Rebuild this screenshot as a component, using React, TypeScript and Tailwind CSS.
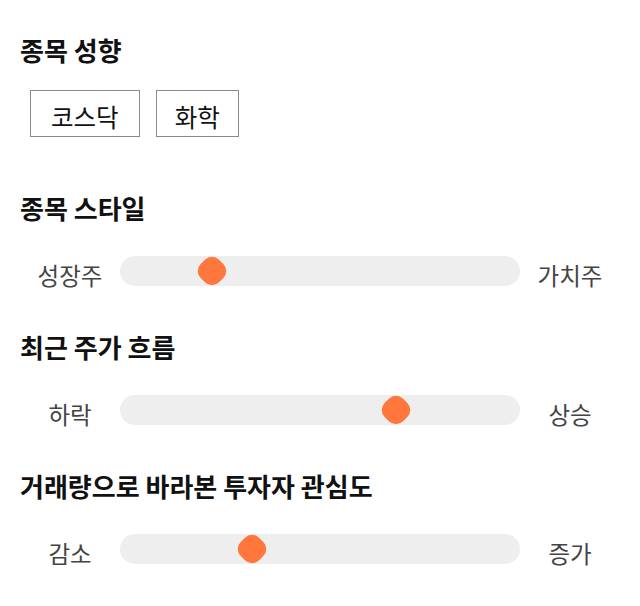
import React from 'react';

const font = { fontFamily: '"Noto Sans CJK KR", "Noto Sans", sans-serif' };

type SliderProps = {
  left: string;
  right: string;
  value: number; // 0..1 along the track
};

function Slider({ left, right, value }: SliderProps) {
  return (
    <div className="flex items-center h-[30px]">
      <span className="w-[100px] text-center text-[23.5px] text-[#444444] translate-y-[5px]">{left}</span>
      <div className="relative w-[400px] h-[30px] rounded-full bg-[#eeeeee]">
        <div
          className="absolute top-1/2 -translate-x-1/2 -translate-y-1/2"
          style={{ left: `${value * 100}%` }}
        >
          <div className="w-[26px] h-[26px] rounded-[10px] rotate-45 bg-[#ff773d]" />
        </div>
      </div>
      <span className="w-[100px] text-center text-[23.5px] text-[#444444] translate-y-[5px]">{right}</span>
    </div>
  );
}

export default function App() {
  return (
    <div className="min-h-screen bg-white px-5 pt-[34px]" style={font}>
      <h2 className="h-8 leading-8 text-[26px] font-bold text-[#111111]">종목 성향</h2>
      <div className="flex gap-4 ml-[10px] mt-6">
        <button className="h-[47px] px-5 pt-2 border border-[#8a8a8a] text-[24.5px] text-[#111111] bg-white">코스닥</button>
        <button className="h-[47px] px-[18px] pt-2 border border-[#8a8a8a] text-[24.5px] text-[#111111] bg-white">화학</button>
      </div>

      <h2 className="h-8 leading-8 mt-[55px] text-[26px] font-bold text-[#111111]">종목 스타일</h2>
      <div className="mt-8">
        <Slider left="성장주" right="가치주" value={0.23} />
      </div>

      <h2 className="h-8 leading-8 mt-[45px] text-[26px] font-bold text-[#111111]">최근 주가 흐름</h2>
      <div className="mt-8">
        <Slider left="하락" right="상승" value={0.69} />
      </div>

      <h2 className="h-8 leading-8 mt-[45px] text-[26px] font-bold text-[#111111]">거래량으로 바라본 투자자 관심도</h2>
      <div className="mt-8">
        <Slider left="감소" right="증가" value={0.33} />
      </div>
    </div>
  );
}
